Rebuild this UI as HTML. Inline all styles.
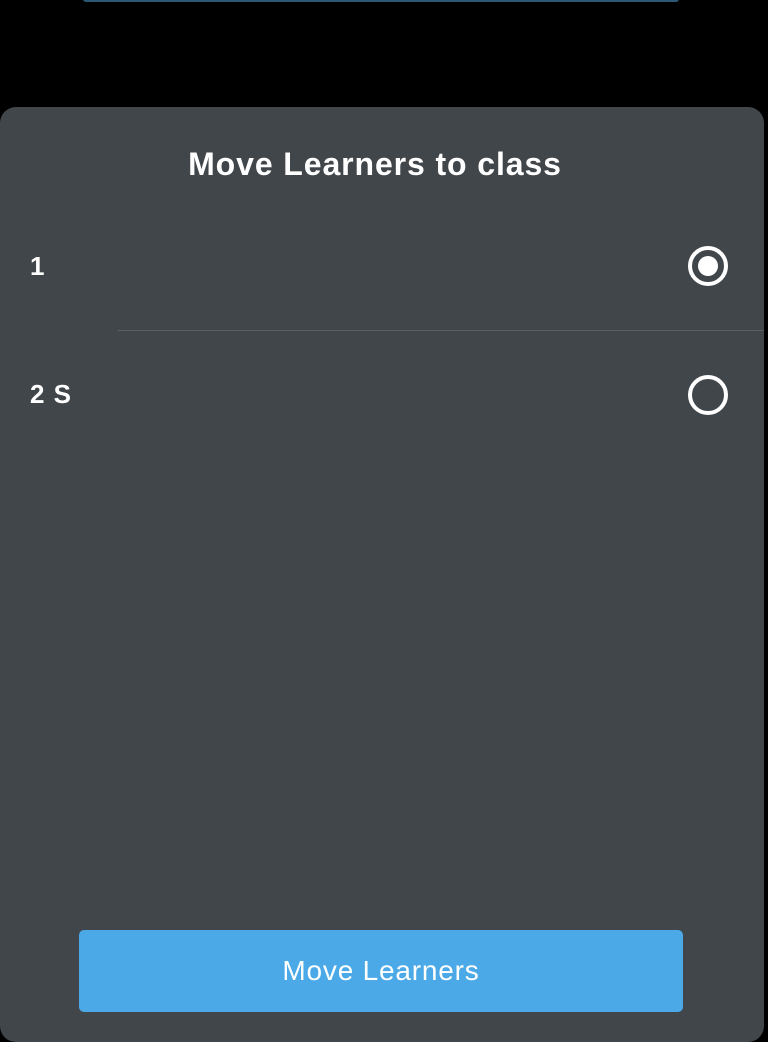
<!DOCTYPE html>
<html style="overflow:hidden;height:1042px"><head><style>
body{margin:0;width:768px;height:1042px;background:#000;position:relative;overflow:hidden;font-family:"Liberation Sans",sans-serif;}
.top{position:absolute;left:83px;top:-4px;width:596px;height:6px;background:#2b5872;border-radius:3px;}
.panel{position:absolute;left:0;top:107px;width:764px;height:935px;background:#41464a;border-radius:16px;}
.title{position:absolute;top:146px;left:0;width:750px;text-align:center;color:#fff;font-size:32px;font-weight:bold;letter-spacing:0.9px;}
.lbl{position:absolute;left:30px;color:#fff;font-size:26px;font-weight:bold;letter-spacing:1px;}
.line{position:absolute;left:118px;top:330px;width:646px;height:1px;background:#5c6165;}
.btn{position:absolute;left:79px;top:930px;width:604px;height:82px;background:#4aa9e6;border-radius:5px;color:#fff;font-size:28px;letter-spacing:0.8px;text-align:center;line-height:82px;}
svg{position:absolute;}
</style></head><body>
<div class="top"></div>
<div class="panel"></div>
<div class="title">Move Learners to class</div>
<div class="lbl" style="top:251px">1</div>
<div class="lbl" style="top:379px">2 S</div>
<div class="line"></div>
<svg style="left:686px;top:244px" width="44" height="44"><circle cx="22" cy="22" r="18" fill="none" stroke="#fff" stroke-width="4"/><circle cx="22" cy="22" r="10" fill="#fff"/></svg>
<svg style="left:686px;top:373px" width="44" height="44"><circle cx="22" cy="22" r="18" fill="none" stroke="#fff" stroke-width="4"/></svg>
<div class="btn">Move Learners</div>
</body></html>
